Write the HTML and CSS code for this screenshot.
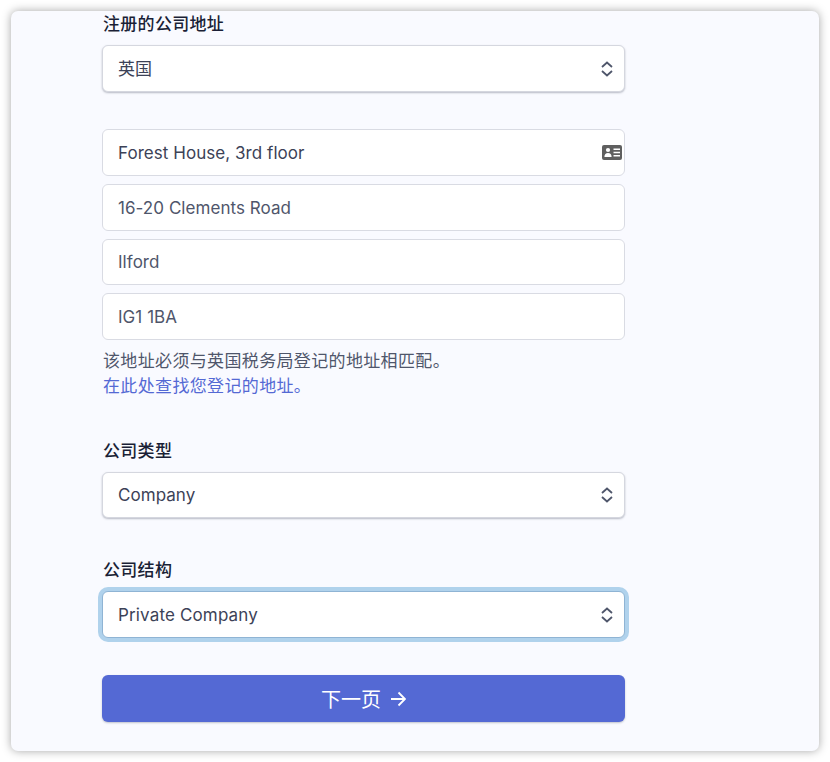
FILE: index.html
```html
<!DOCTYPE html>
<html>
<head>
    <title>注册的公司地址</title>
    <link rel="stylesheet" href="styles.css">
</head>
<body>
    <div class="window">
        <form class="form">
            <div class="field first">
                <label class="label">注册的公司地址</label>
                <div class="control select">
                    <span class="value">英国</span>
                    <svg class="chevrons" viewBox="0 0 12 16" width="12" height="16"><path d="M1 6l5-4.500 5 4.500M1 10l5 4.500 5-4.500"/></svg>
                </div>
            </div>

            <div class="address">
                <div class="control filled">
                    <span class="value">Forest House, 3rd floor</span>
                    <svg class="contact-card" viewBox="0 0 20 15" width="20" height="15">
                        <rect width="20" height="15" rx="2" fill="#5f5f5f"/>
                        <circle cx="6" cy="5" r="2.1" fill="#fff"/>
                        <path d="M2.400 12c0-2.600 1.400-4 3.600-4s3.600 1.400 3.600 4z" fill="#fff"/>
                        <path d="M11.500 3.500h6.500v1.500h-6.500zM11.500 6.800h6.500v1.500h-6.500zM11.500 10.100h6.500v1.500h-6.500z" fill="#fff"/>
                    </svg>
                </div>
                <div class="control"><span class="value">16-20 Clements Road</span></div>
                <div class="control short"><span class="value">Ilford</span></div>
                <div class="control"><span class="value">IG1 1BA</span></div>
            </div>
            <p class="help">该地址必须与英国税务局登记的地址相匹配。<br><a href="#">在此处查找您登记的地址。</a></p>

            <div class="field">
                <label class="label">公司类型</label>
                <div class="control select short">
                    <span class="value">Company</span>
                    <svg class="chevrons" viewBox="0 0 12 16" width="12" height="16"><path d="M1 6l5-4.500 5 4.500M1 10l5 4.500 5-4.500"/></svg>
                </div>
            </div>

            <div class="field">
                <label class="label">公司结构</label>
                <div class="control select focused">
                    <span class="value">Private Company</span>
                    <svg class="chevrons" viewBox="0 0 12 16" width="12" height="16"><path d="M1 6l5-4.500 5 4.500M1 10l5 4.500 5-4.500"/></svg>
                </div>
            </div>

            <button class="next" type="button">
                <span>下一页</span>
                <svg viewBox="0 0 16 16" width="16" height="16"><path d="M1 8h14M8.500 1.500l6.500 6.500-6.500 6.500"/></svg>
            </button>
        </form>
    </div>
</body>
</html>
```

FILE: styles.css
```css
* {
    box-sizing: border-box;
}
html, body {
    margin: 0;
    background: #fff;
}
body {
    width: 830px;
    height: 762px;
    padding: 11px;
    overflow: hidden;
    font-family: Inter, "Noto Sans CJK SC", sans-serif;
    font-size: 17px;
    color: #3c4257;
}
.window {
    width: 808px;
    height: 740px;
    border-radius: 7px;
    background: #f9faff;
    box-shadow: 0 0 10px rgba(0, 0, 0, 0.35);
    padding-left: 91px;
    overflow: hidden;
}
.form {
    width: 523px;
}
.field {
    margin-top: 39px;
}
.field.first {
    margin-top: 0;
}
.label {
    display: block;
    height: 24px;
    margin-bottom: 10px;
    padding-left: 1px;
    line-height: 26px;
    font-weight: 500;
    letter-spacing: 0.3px;
    color: #1a1f36;
}
.control {
    display: flex;
    align-items: center;
    justify-content: space-between;
    height: 47px;
    padding: 0 2px 0 15px;
    background: #fff;
    border: 1px solid #d9dbe3;
    border-radius: 6px;
    line-height: 24px;
    letter-spacing: 0.05px;
    color: #4f566b;
}
.control.filled, .select {
    color: #3c4257;
}
.select {
    padding-right: 11px;
    border-color: #d5d7df;
    box-shadow: 0 1px 2px rgba(60, 66, 87, 0.35);
}
.select.focused {
    border-color: #8fb4d4;
    box-shadow: 0 0 0 4px #b0d2ec;
    letter-spacing: 0.15px;
}
.chevrons {
    fill: none;
    stroke: #4f566b;
    stroke-width: 1.8;
}
.contact-card {
    flex: none;
}
.address {
    display: flex;
    flex-direction: column;
    gap: 8px;
    margin-top: 37px;
}
.control.short {
    height: 46px;
}
.help {
    margin: 9px 0 0;
    padding-left: 1px;
    line-height: 25px;
    letter-spacing: 0.35px;
    color: #4f566b;
}
.help a {
    color: #5469d4;
    text-decoration: none;
}
.help + .field {
    margin-top: 39px;
}
.next {
    display: flex;
    align-items: center;
    justify-content: center;
    gap: 9px;
    width: 100%;
    height: 47px;
    margin-top: 37px;
    border: 0;
    border-radius: 6px;
    background: #5469d4;
    box-shadow: 0 1px 2px rgba(60, 66, 87, 0.3);
    color: #fff;
    font-family: inherit;
    font-size: 20px;
}
.next svg {
    fill: none;
    stroke: #fff;
    stroke-width: 1.8;
}
```
